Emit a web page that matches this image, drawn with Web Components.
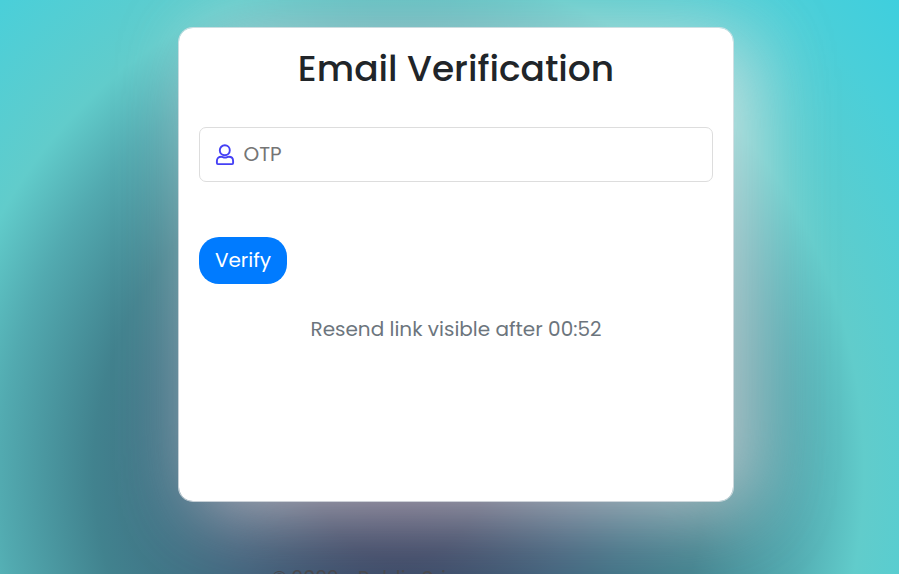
<!DOCTYPE html>
<html lang="en">
<head>
<meta charset="utf-8">
<title>Email Verification</title>
<style>
html,body{margin:0;height:574px;overflow:hidden}
body{font-family:Poppins,Inter,sans-serif;font-size:20px;color:#212529}
</style>
</head>
<body>
<verify-page>
  <verify-card heading="Email Verification">
    <otp-field label="OTP"></otp-field>
    <pill-button>Verify</pill-button>
    <resend-note>Resend link visible after 00:52</resend-note>
  </verify-card>
  <page-footer slot="footer">© 2022 - Public Sri</page-footer>
</verify-page>
<script>
const define = (name, html) => customElements.define(name, class extends HTMLElement {
  constructor() {
    super();
    const root = this.attachShadow({mode: 'open'});
    const t = document.createElement('template');
    t.innerHTML = html;
    root.append(t.content.cloneNode(true));
  }
  connectedCallback() {
    const h = this.shadowRoot.querySelector('h1');
    if (h) h.textContent = this.getAttribute('heading');
    const input = this.shadowRoot.querySelector('input');
    if (input) input.placeholder = this.getAttribute('label');
  }
});
define('verify-page', `<style>
:host{display:flex;flex-direction:column;box-sizing:border-box;height:574px;padding:27px 165px 0 178px;overflow:hidden;
background:radial-gradient(464px 500px at 400px 470px,#3b3d5e 0%,#3a4664 18%,#40617b 38%,#407185 50%,#41828e 66%,#52aab0 86%,#61cccb 100%,#4acfd9 127%,#3ecfde 143%)}
</style><slot></slot><slot name="footer"></slot>`);
define('verify-card', `<style>
:host{display:flex;flex-direction:column;box-sizing:border-box;width:556px;height:475px;flex:none;padding:18px 20px 0;border:1px solid rgba(222,226,230,.8);border-radius:15px;background:#fff;background-clip:padding-box;box-shadow:20px 10px 80px rgba(248,235,234,.68)}
h1{margin:0 0 35px;font-size:36px;line-height:46px;font-weight:500;text-align:center;white-space:nowrap}
</style><h1></h1><slot></slot>`);
define('otp-field', `<style>
:host{display:flex;align-items:center;box-sizing:border-box;width:514px;height:55px;border:1px solid #ddd;border-radius:7px;padding-left:15px;gap:8.500px}
svg{width:20px;height:22px;flex:none}
input{border:0;outline:0;padding:0 0 2px;background:none;font:inherit;width:440px}
input::placeholder{color:#757575;opacity:1}
</style><svg viewBox="0 0 20 22" fill="none" stroke="#4540f5" stroke-width="1.9"><circle cx="9.800" cy="6.300" r="5"/><path d="M6.2 12.8C3.6 12.8 1.9 14.6 1.9 17v2q0 1.100 1 1.100h14.200q1 0 1-1.100V17c0-2.400-1.700-4.200-4.300-4.200-1.300 0-1.900.800-3.800.800s-2.500-.800-3.800-.800Z"/></svg><input>`);
define('pill-button', `<style>
:host{display:flex;margin-top:55px}
button{width:88px;height:47px;padding:0 0 2px;border:0;border-radius:20px;background:#007bff;color:#fff;font:inherit}
</style><button><slot></slot></button>`);
define('resend-note', `<style>:host{display:block;margin-top:30px;line-height:30px;color:#6c757d;text-align:center;white-space:nowrap}</style><slot></slot>`);
define('page-footer', `<style>:host{display:block;flex:none;margin-top:61px;padding-left:93.500px;line-height:30px;color:#48494f;white-space:nowrap;word-spacing:-1.200px}</style><slot></slot>`);
</script>
</body>
</html>
